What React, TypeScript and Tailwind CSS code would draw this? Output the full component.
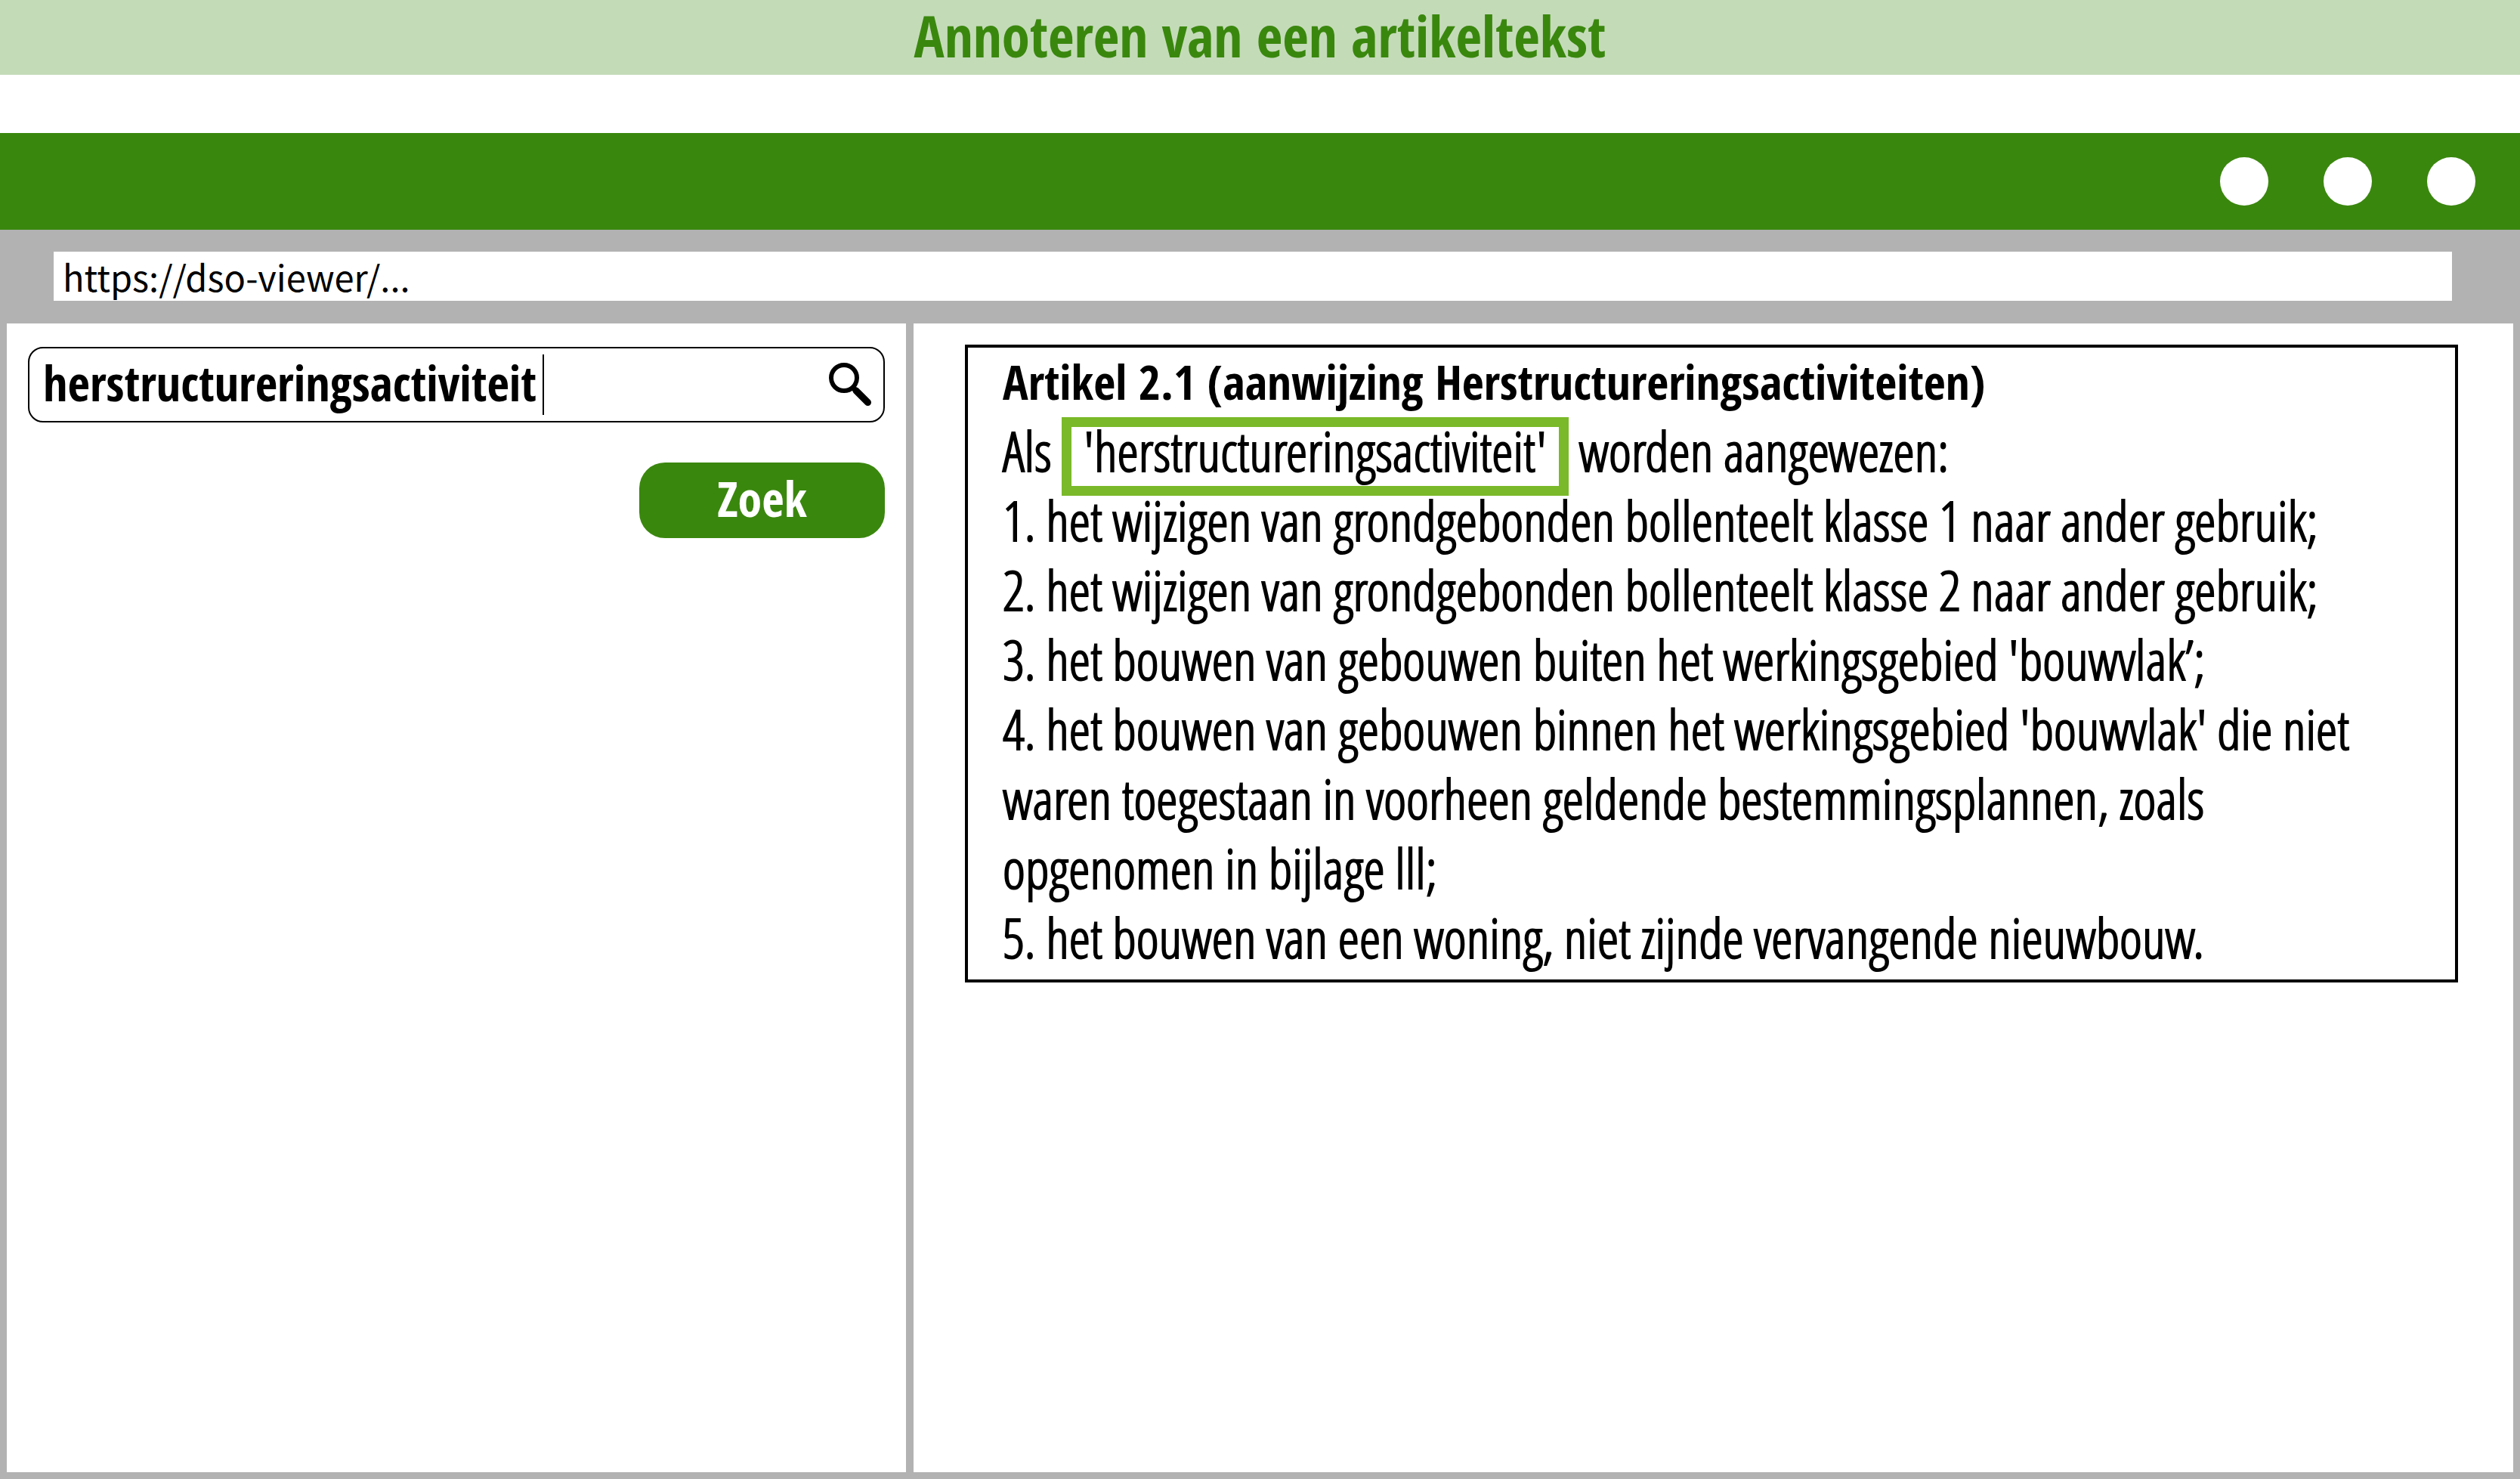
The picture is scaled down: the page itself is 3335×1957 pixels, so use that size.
const items = [
  "1. het wijzigen van grondgebonden bollenteelt klasse 1 naar ander gebruik;",
  "2. het wijzigen van grondgebonden bollenteelt klasse 2 naar ander gebruik;",
  "3. het bouwen van gebouwen buiten het werkingsgebied 'bouwvlak’;",
  "4. het bouwen van gebouwen binnen het werkingsgebied 'bouwvlak' die niet waren toegestaan in voorheen geldende bestemmingsplannen, zoals opgenomen in bijlage lll;",
  "5. het bouwen van een woning, niet zijnde vervangende nieuwbouw.",
];

function SearchIcon() {
  return (
    <svg viewBox="0 0 56 58" className="h-[58px] w-[56px]" fill="none" stroke="black" aria-hidden="true">
      <circle cx="20" cy="20" r="17" strokeWidth="6" />
      <path d="M32 33 L35 36" strokeWidth="7" />
      <path d="M36 37 L51.500 52.500" strokeWidth="9" strokeLinecap="round" />
    </svg>
  );
}

export default function App() {
  return (
    <div className="flex min-h-screen flex-col bg-white font-['Open_Sans_Condensed','Open_Sans',sans-serif] text-black">
      <header className="flex h-[99px] justify-center bg-[#c4dbb8]">
        <h1 className="text-[75px] leading-[94px] font-bold text-[#3a870e]">Annoteren van een artikeltekst</h1>
      </header>

      <main className="mt-[77px] flex flex-1 flex-col bg-[#b2b2b2]">
        <div className="flex h-32 items-center justify-end gap-[73px] bg-[#3a870e] pr-[59px]">
          <span className="size-16 rounded-full bg-white" />
          <span className="size-16 rounded-full bg-white" />
          <span className="size-16 rounded-full bg-white" />
        </div>

        <div className="pt-[29px] pr-[90px] pb-[30px] pl-[71px]">
          <input
            type="text"
            aria-label="Adres"
            defaultValue="https://dso-viewer/..."
            className="block h-[65px] w-full bg-white px-3 font-['Noto_Sans_CJK_JP','Noto_Sans',sans-serif] text-[47px] leading-[65px] outline-none"
          />
        </div>

        <div className="grid flex-1 grid-cols-[1190fr_2117fr] gap-[10px] px-[9px] pb-[9px]">
          <form className="flex flex-col items-end bg-white px-7 pt-[31px]" onSubmit={(e) => e.preventDefault()}>
            <label className="flex h-[100px] w-full items-center rounded-[20px] border-2 border-black pr-4 pl-[18px]">
              <input
                type="text"
                aria-label="Zoekterm"
                defaultValue="herstructureringsactiviteit"
                className="field-sizing-content pb-1 text-[64px] leading-[92px] font-bold outline-none"
              />
              <span className="ml-2 h-20 w-[2px] bg-black" />
              <span className="ml-auto">
                <SearchIcon />
              </span>
            </label>
            <button
              type="submit"
              className="mt-[53px] h-[100px] w-[325px] rounded-[34px] bg-[#3a870e] pb-1 text-[64px] leading-[92px] font-bold text-white"
            >
              Zoek
            </button>
          </form>

          <section className="bg-white pt-7 pr-[73px] pl-[68px]">
            <article className="border-4 border-black pr-[120px] pb-[10px] pl-[46px] font-['Open_Sans_Condensed_Light','Roboto_Condensed','Open_Sans',sans-serif] text-[72px] leading-[92px] [-webkit-text-stroke:2px_black]">
              <h2 className="font-['Open_Sans_Condensed','Open_Sans',sans-serif] text-[63px] leading-[90px] font-bold [-webkit-text-stroke:0]">
                Artikel 2.1 (aanwijzing Herstructureringsactiviteiten)
              </h2>
              <p>
                Als{" "}
                <mark className="-mb-4 inline-block border-[13px] border-[#7ab929] bg-transparent px-4 pb-4 leading-[62px] text-black">
                  'herstructureringsactiviteit'
                </mark>{" "}
                worden aangewezen:
              </p>
              <ol>
                {items.map((item) => (
                  <li key={item}>{item}</li>
                ))}
              </ol>
            </article>
          </section>
        </div>
      </main>
    </div>
  );
}
